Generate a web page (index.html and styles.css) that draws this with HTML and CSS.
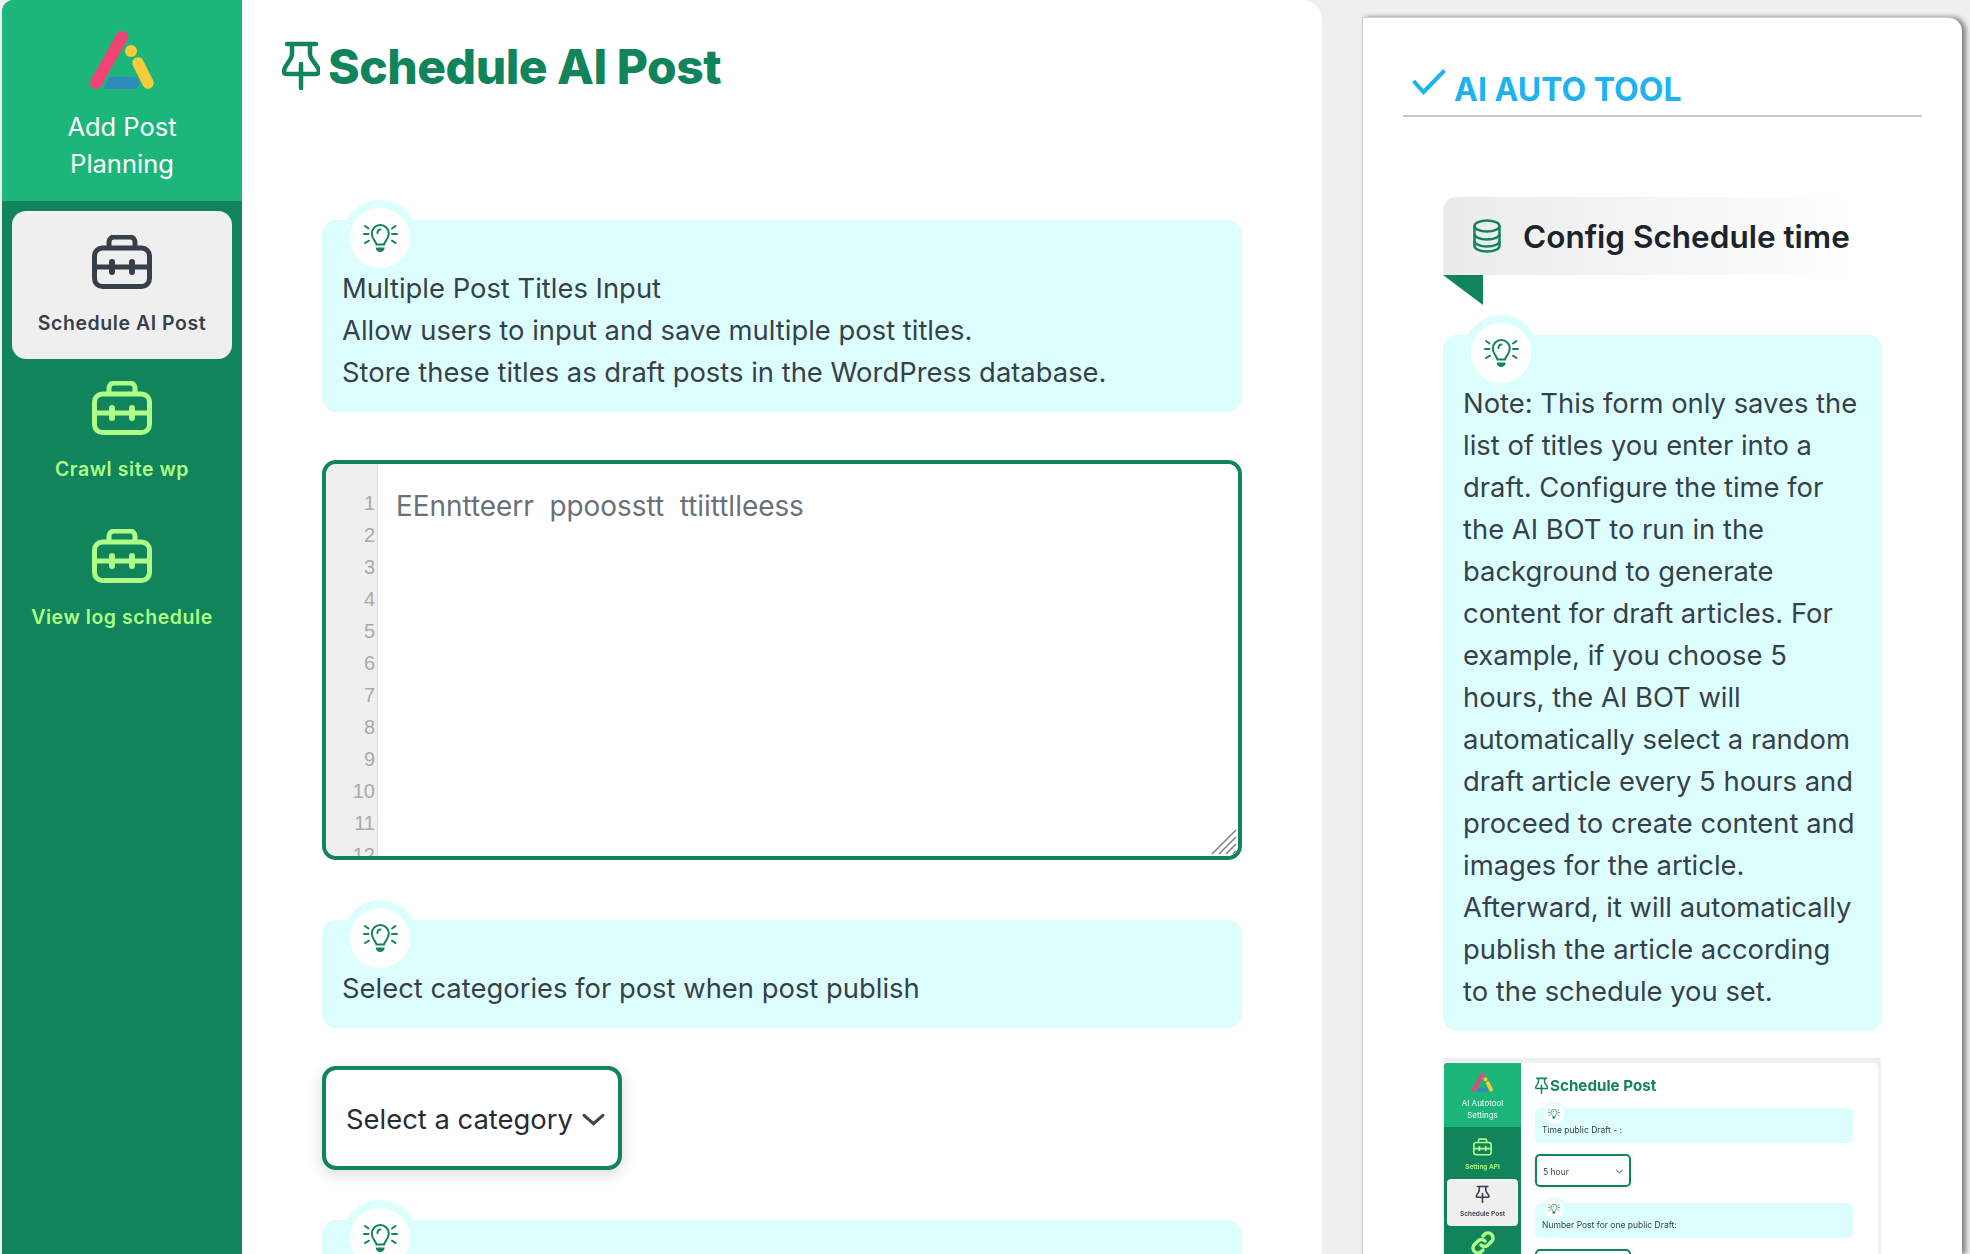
FILE: index.html
```html
<!DOCTYPE html>
<html lang="en">

<head>
    <meta charset="UTF-8">
    <meta name="viewport" content="width=device-width, initial-scale=1.0">
    <title>Schedule AI Post</title>
    <link rel="stylesheet" href="styles.css">
</head>

<body>
    <!-- shared icons -->
    <svg class="sprite" xmlns="http://www.w3.org/2000/svg">
        <symbol id="logo" viewBox="0 0 70 64">
            <path d="M35 8 L9 54" fill="none" stroke="#f14474" stroke-width="12" stroke-linecap="round"/>
            <circle cx="44" cy="22" r="6" fill="#f8cb3a"/>
            <path d="M51 34 L61 54" fill="none" stroke="#f8cb3a" stroke-width="11.500" stroke-linecap="round"/>
            <path d="M22 48 H46 a6 6 0 0 1 0 12 H16 Z" fill="#2e8bba"/>
        </symbol>
        <symbol id="toolbox" viewBox="0 0 60 54">
            <path d="M17 13 V7 a5 5 0 0 1 5-5 H38 a5 5 0 0 1 5 5 V13" fill="none" stroke="currentColor" stroke-width="5"/>
            <rect x="2.500" y="13" width="55" height="38.500" rx="8" fill="none" stroke="currentColor" stroke-width="5"/>
            <path d="M3 32 H57" fill="none" stroke="currentColor" stroke-width="5"/>
            <path d="M20 27 V37 M40 27 V37" fill="none" stroke="currentColor" stroke-width="6" stroke-linecap="round"/>
        </symbol>
        <symbol id="pin" viewBox="0 0 38 50">
            <path d="M5 4 H34 M10 4 V14 C10 20 2 26 2 31 Q2 34 5 34 H34 Q37 34 37 31 C37 26 28 20 28 14 V4 M19 24 V48" fill="none" stroke="currentColor" stroke-width="4.500" stroke-linecap="round" stroke-linejoin="round"/>
        </symbol>
        <symbol id="bulb" viewBox="0 0 35 29">
            <g fill="none" stroke="currentColor" stroke-width="2" stroke-linecap="round">
                <path d="M13.500 20.500 C13 17 8.800 15 8.800 9.500 A8.500 8.500 0 0 1 25.800 9.500 C25.800 15 21.600 17 21 20.500 Z"/>
                <path d="M14.500 9 a3 3 0 0 1 3-3.500"/>
                <path d="M1 10 H5.500 M29 10 H34 M2 2 L5.500 4.500 M32.500 2 L29 4.500 M2 19 L6 16.700 M32.500 19 L29 16.700"/>
            </g>
            <path d="M12.700 23.500 h9 a4.500 4.500 0 0 1-9 0z" fill="currentColor"/>
        </symbol>
        <symbol id="chevron" viewBox="0 0 22 14">
            <path d="M2 3 L11 11 L20 3" fill="none" stroke="currentColor" stroke-width="3" stroke-linecap="round"/>
        </symbol>
    </svg>

    <div class="app">
        <aside class="sidebar">
            <div class="brand">
                <svg class="brand-logo"><use href="#logo"/></svg>
                <p>Add Post<br>Planning</p>
            </div>
            <a class="side-item active" href="#">
                <svg class="side-icon"><use href="#toolbox"/></svg>
                <span>Schedule AI Post</span>
            </a>
            <a class="side-item" href="#">
                <svg class="side-icon"><use href="#toolbox"/></svg>
                <span>Crawl site wp</span>
            </a>
            <a class="side-item" href="#">
                <svg class="side-icon"><use href="#toolbox"/></svg>
                <span>View log schedule</span>
            </a>
        </aside>

        <main class="content">
            <h1 class="page-title">
                <svg class="title-pin"><use href="#pin"/></svg>
                Schedule AI Post
            </h1>

            <div class="form">
                <div class="tip tip-first">
                    <span class="tip-icon"><svg><use href="#bulb"/></svg></span>
                    <p>Multiple Post Titles Input<br>
                    Allow users to input and save multiple post titles.<br>
                    Store these titles as draft posts in the WordPress database.</p>
                </div>

                <div class="editor">
                    <div class="gutter">
                        <span>1</span><span>2</span><span>3</span><span>4</span><span>5</span><span>6</span>
                        <span>7</span><span>8</span><span>9</span><span>10</span><span>11</span><span>12</span>
                    </div>
                    <textarea class="titles" placeholder="EEnntteerr  ppoosstt  ttiittlleess"></textarea>
                    <svg class="grip" viewBox="0 0 26 26">
                        <path d="M1 25 L25 1 M8 25 L25 8 M15 25 L25 15 M22 25 L25 22" fill="none" stroke="#808080" stroke-width="1.500"/>
                    </svg>
                </div>

                <div class="tip tip-category">
                    <span class="tip-icon"><svg><use href="#bulb"/></svg></span>
                    <p>Select categories for post when post publish</p>
                </div>

                <div class="select-box">
                    <span>Select a category</span>
                    <svg><use href="#chevron"/></svg>
                </div>

                <div class="tip">
                    <span class="tip-icon"><svg><use href="#bulb"/></svg></span>
                    <p>&nbsp;</p>
                </div>
            </div>
        </main>

        <section class="tool-panel">
            <h2 class="tool-title">
                <svg class="tool-check" viewBox="0 0 34 26">
                    <path d="M1.500 12 L11.500 23 L32.500 1.500" fill="none" stroke="#1db2f0" stroke-width="4"/>
                </svg>
                AI AUTO TOOL
            </h2>

            <div class="tool-body">
                <div class="ribbon">
                    <svg class="ribbon-icon" viewBox="0 0 28 34">
                        <g fill="none" stroke="#11845b" stroke-width="2.500">
                            <ellipse cx="14" cy="7" rx="12.500" ry="5.500"/>
                            <path d="M1.500 7 V27 C1.500 30 7 32.500 14 32.500 S26.500 30 26.500 27 V7"/>
                            <path d="M1.500 15 C1.500 18 7 20.500 14 20.500 S26.500 18 26.500 15"/>
                            <path d="M1.500 22 C1.500 25 7 27.500 14 27.500 S26.500 25 26.500 22"/>
                        </g>
                    </svg>
                    <h3>Config Schedule time</h3>
                </div>
                <div class="ribbon-fold"></div>

                <div class="tip tip-note">
                    <span class="tip-icon"><svg><use href="#bulb"/></svg></span>
                    <p>Note: This form only saves the list of titles you enter into a draft. Configure the time for the AI BOT to run in the background to generate content for draft articles. For example, if you choose 5 hours, the AI BOT will automatically select a random draft article every 5 hours and proceed to create content and images for the article. Afterward, it will automatically publish the article according to the schedule you set.</p>
                </div>

                <!-- small preview of the settings screen -->
                <div class="shot">
                    <div class="shot-side">
                        <div class="shot-brand">
                            <svg class="shot-logo"><use href="#logo"/></svg>
                            <p>AI Autotool<br>Settings</p>
                        </div>
                        <div class="shot-item">
                            <svg class="shot-icon"><use href="#toolbox"/></svg>
                            <span>Setting API</span>
                        </div>
                        <div class="shot-item shot-active">
                            <svg class="shot-icon"><use href="#pin"/></svg>
                            <span>Schedule Post</span>
                        </div>
                        <svg class="shot-link" viewBox="0 0 24 24">
                            <g fill="none" stroke="#adff87" stroke-width="3.500" stroke-linecap="round">
                                <path d="M10 14 a5 5 0 0 0 7 0 l4-4 a5 5 0 0 0-7-7 l-2 2"/>
                                <path d="M14 10 a5 5 0 0 0-7 0 l-4 4 a5 5 0 0 0 7 7 l2-2"/>
                            </g>
                        </svg>
                    </div>
                    <div class="shot-main">
                        <div class="shot-title">
                            <svg><use href="#pin"/></svg>
                            Schedule Post
                        </div>
                        <div class="shot-tip">
                            <span class="shot-bulb"><svg><use href="#bulb"/></svg></span>
                            <p>Time public Draft - :</p>
                        </div>
                        <div class="shot-select">
                            <span>5 hour</span>
                            <svg><use href="#chevron"/></svg>
                        </div>
                        <div class="shot-tip">
                            <span class="shot-bulb"><svg><use href="#bulb"/></svg></span>
                            <p>Number Post for one public Draft:</p>
                        </div>
                        <div class="shot-select"></div>
                    </div>
                </div>
            </div>
        </section>
    </div>
</body>

</html>
```

FILE: styles.css
```css
html,
body {
    height: 100%;
    margin: 0;
    overflow: hidden;
}

body {
    background-color: #efefef;
    color: #373f4a;
    font-family: Inter, "Liberation Sans", sans-serif;
}

p,
h1,
h2,
h3 {
    margin: 0;
}

.sprite {
    display: none;
}

.app {
    display: flex;
    align-items: flex-start;
    height: 1254px;
    padding-left: 2px;
}

/* Sidebar */
.sidebar {
    flex: 0 0 240px;
    height: 100%;
    background-color: #11845b;
    border-top-left-radius: 12px;
    overflow: hidden;
}

.brand {
    height: 201px;
    box-sizing: border-box;
    padding-top: 29px;
    background-color: #1cb67b;
    color: white;
    text-align: center;
    font-size: 25.500px;
    line-height: 37px;
}

.brand-logo {
    display: block;
    width: 70px;
    height: 64px;
    margin: 0 auto 15px;
}

.side-item {
    display: flex;
    flex-direction: column;
    align-items: center;
    height: 148px;
    box-sizing: border-box;
    margin: 0 10px;
    padding-top: 22px;
    border-radius: 14px;
    color: #adff87;
    font-size: 19.500px;
    font-weight: 600;
    letter-spacing: 0.55px;
    line-height: 24px;
    text-decoration: none;
}

.side-item.active {
    margin-top: 10px;
    padding-top: 24px;
    background-color: #efefef;
    color: #373f4a;
}

.side-icon {
    width: 60px;
    height: 54px;
    margin-bottom: 22px;
}

/* Main column */
.content {
    flex: 0 0 1080px;
    height: 100%;
    box-sizing: border-box;
    padding: 38px 40px 0;
    background-color: white;
    border-top-right-radius: 20px;
}

.page-title {
    display: flex;
    align-items: center;
    gap: 8px;
    height: 56px;
    color: #11845b;
    font-size: 48px;
    font-weight: 800;
    letter-spacing: -0.5px;
    white-space: nowrap;
}

.title-pin {
    width: 38px;
    height: 50px;
    margin-top: -3px;
}

.form {
    padding: 126px 40px 0;
}

.tip {
    position: relative;
    padding: 47px 20px 19px;
    background-color: #dcfffe;
    border-radius: 14px;
    font-size: 27.400px;
    line-height: 42px;
}

.tip-first {
    margin-bottom: 48px;
}

.tip-category {
    margin-bottom: 38px;
}

/* Round badge that sits over the top edge of a tip */
.tip-icon {
    position: absolute;
    top: -20px;
    left: 20px;
    display: flex;
    align-items: center;
    justify-content: center;
    width: 60px;
    height: 60px;
    background-color: white;
    border: 8px solid #dcfffe;
    border-radius: 50%;
    color: #11845b;
}

.tip-icon svg {
    width: 35px;
    height: 29px;
}

.editor {
    position: relative;
    display: flex;
    height: 400px;
    box-sizing: border-box;
    margin-bottom: 60px;
    border: 4px solid #11845b;
    border-radius: 14px;
    overflow: hidden;
}

.gutter {
    display: flex;
    flex: 0 0 52px;
    flex-direction: column;
    box-sizing: border-box;
    padding: 23px 2px 0 0;
    background-color: #efefef;
    border-right: 1px solid #ddd;
    color: #aaa;
    font-family: "Liberation Sans", sans-serif;
    font-size: 20px;
    line-height: 32px;
    text-align: right;
}

.titles {
    flex: 1;
    padding: 21px 18px;
    border: none;
    outline: none;
    resize: none;
    color: #373f4a;
    font-family: inherit;
    font-size: 27.900px;
    line-height: 42px;
}

.titles::placeholder {
    color: #6a7079;
    opacity: 1;
}

.grip {
    position: absolute;
    right: 1px;
    bottom: 1px;
    width: 26px;
    height: 26px;
}

.select-box {
    display: flex;
    align-items: center;
    justify-content: space-between;
    width: 300px;
    height: 104px;
    box-sizing: border-box;
    margin-bottom: 50px;
    padding: 2px 13px 0 20px;
    background-color: white;
    border: 4px solid #11845b;
    border-radius: 14px;
    box-shadow: 0 4px 16px rgba(0, 0, 0, 0.15);
    color: #272c33;
    font-size: 27.400px;
}

.select-box svg {
    width: 23px;
    height: 15px;
    color: #444;
}

/* Right panel */
.tool-panel {
    flex: 0 0 600px;
    height: 1237px;
    box-sizing: border-box;
    margin: 17px 0 0 40px;
    padding: 0 40px;
    background-color: white;
    border-top: 1px solid #ccc;
    border-left: 1px solid #ccc;
    border-top-right-radius: 14px;
    box-shadow: 4px 0 5px rgba(0, 0, 0, 0.45);
}

.tool-title {
    display: flex;
    align-items: flex-end;
    gap: 8px;
    height: 99px;
    box-sizing: border-box;
    padding: 0 0 5px 9px;
    border-bottom: 2px solid #c8c8c8;
    color: #1db2f0;
    font-size: 32px;
    font-weight: 700;
    line-height: 40px;
}

.tool-check {
    width: 34px;
    height: 26px;
    margin-bottom: 15px;
}

.tool-body {
    padding: 80px 40px 0;
}

.ribbon {
    display: flex;
    align-items: center;
    gap: 22px;
    width: 427px;
    height: 78px;
    box-sizing: border-box;
    padding-left: 30px;
    background: linear-gradient(90deg, #ebebeb, #ffffff);
    border-top-left-radius: 14px;
}

.ribbon h3 {
    color: #1e2229;
    font-size: 31.500px;
    font-weight: 600;
    white-space: nowrap;
}

.ribbon-icon {
    width: 28px;
    height: 34px;
}

.ribbon-fold {
    width: 0;
    height: 0;
    margin-bottom: 30px;
    border-top: 30px solid #11845b;
    border-left: 40px solid transparent;
}

.tip-note {
    margin-bottom: 27px;
}

/* Preview image */
.shot {
    display: flex;
    width: 438px;
    height: 300px;
    box-sizing: border-box;
    padding: 5px 3px 0 1px;
    background-color: #efefef;
    filter: blur(0.35px);
}

.shot-side {
    flex: 0 0 77px;
    height: 100%;
    background-color: #11845b;
    border-top-left-radius: 4px;
    overflow: hidden;
}

.shot-brand {
    height: 64px;
    box-sizing: border-box;
    padding-top: 9px;
    background-color: #1cb67b;
    color: white;
    text-align: center;
    font-size: 8px;
    line-height: 12px;
}

.shot-logo {
    display: block;
    width: 23px;
    height: 21px;
    margin: 0 auto 4px;
}

.shot-item {
    display: flex;
    flex-direction: column;
    align-items: center;
    height: 47px;
    box-sizing: border-box;
    margin: 0 3px;
    padding-top: 11px;
    color: #adff87;
    font-size: 6.500px;
    font-weight: 600;
}

.shot-icon {
    width: 19px;
    height: 18px;
    margin-bottom: 7px;
}

.shot-active {
    margin-top: 5px;
    padding-top: 6px;
    background-color: #efefef;
    border-radius: 4px;
    color: #373f4a;
}

.shot-link {
    display: block;
    width: 24px;
    height: 24px;
    margin: 5px auto 0;
}

.shot-main {
    flex: 1;
    padding: 0 25px 0 14px;
    background-color: white;
    border-top-right-radius: 5px;
}

.shot-title {
    display: flex;
    align-items: center;
    gap: 2px;
    height: 45px;
    box-sizing: border-box;
    color: #11845b;
    font-size: 15.200px;
    font-weight: 700;
}

.shot-title svg {
    width: 13px;
    height: 17px;
}

.shot-tip {
    position: relative;
    height: 35px;
    box-sizing: border-box;
    margin-bottom: 11px;
    padding: 16px 7px 0;
    background-color: #dcfffe;
    border-radius: 5px;
    font-size: 8.500px;
    line-height: 12px;
}

.shot-bulb {
    position: absolute;
    top: -6px;
    left: 7px;
    display: flex;
    align-items: center;
    justify-content: center;
    width: 20px;
    height: 20px;
    background-color: white;
    border: 2px solid #dcfffe;
    border-radius: 50%;
    color: #11845b;
}

.shot-bulb svg {
    width: 12px;
    height: 10px;
}

.shot-select {
    display: flex;
    align-items: center;
    justify-content: space-between;
    width: 96px;
    height: 33px;
    box-sizing: border-box;
    margin-bottom: 16px;
    padding: 2px 6px 0 6px;
    border: 2px solid #11845b;
    border-radius: 5px;
    box-shadow: 0 1px 4px rgba(0, 0, 0, 0.12);
    font-size: 8.500px;
}

.shot-select svg {
    width: 7px;
    height: 5px;
}
```
